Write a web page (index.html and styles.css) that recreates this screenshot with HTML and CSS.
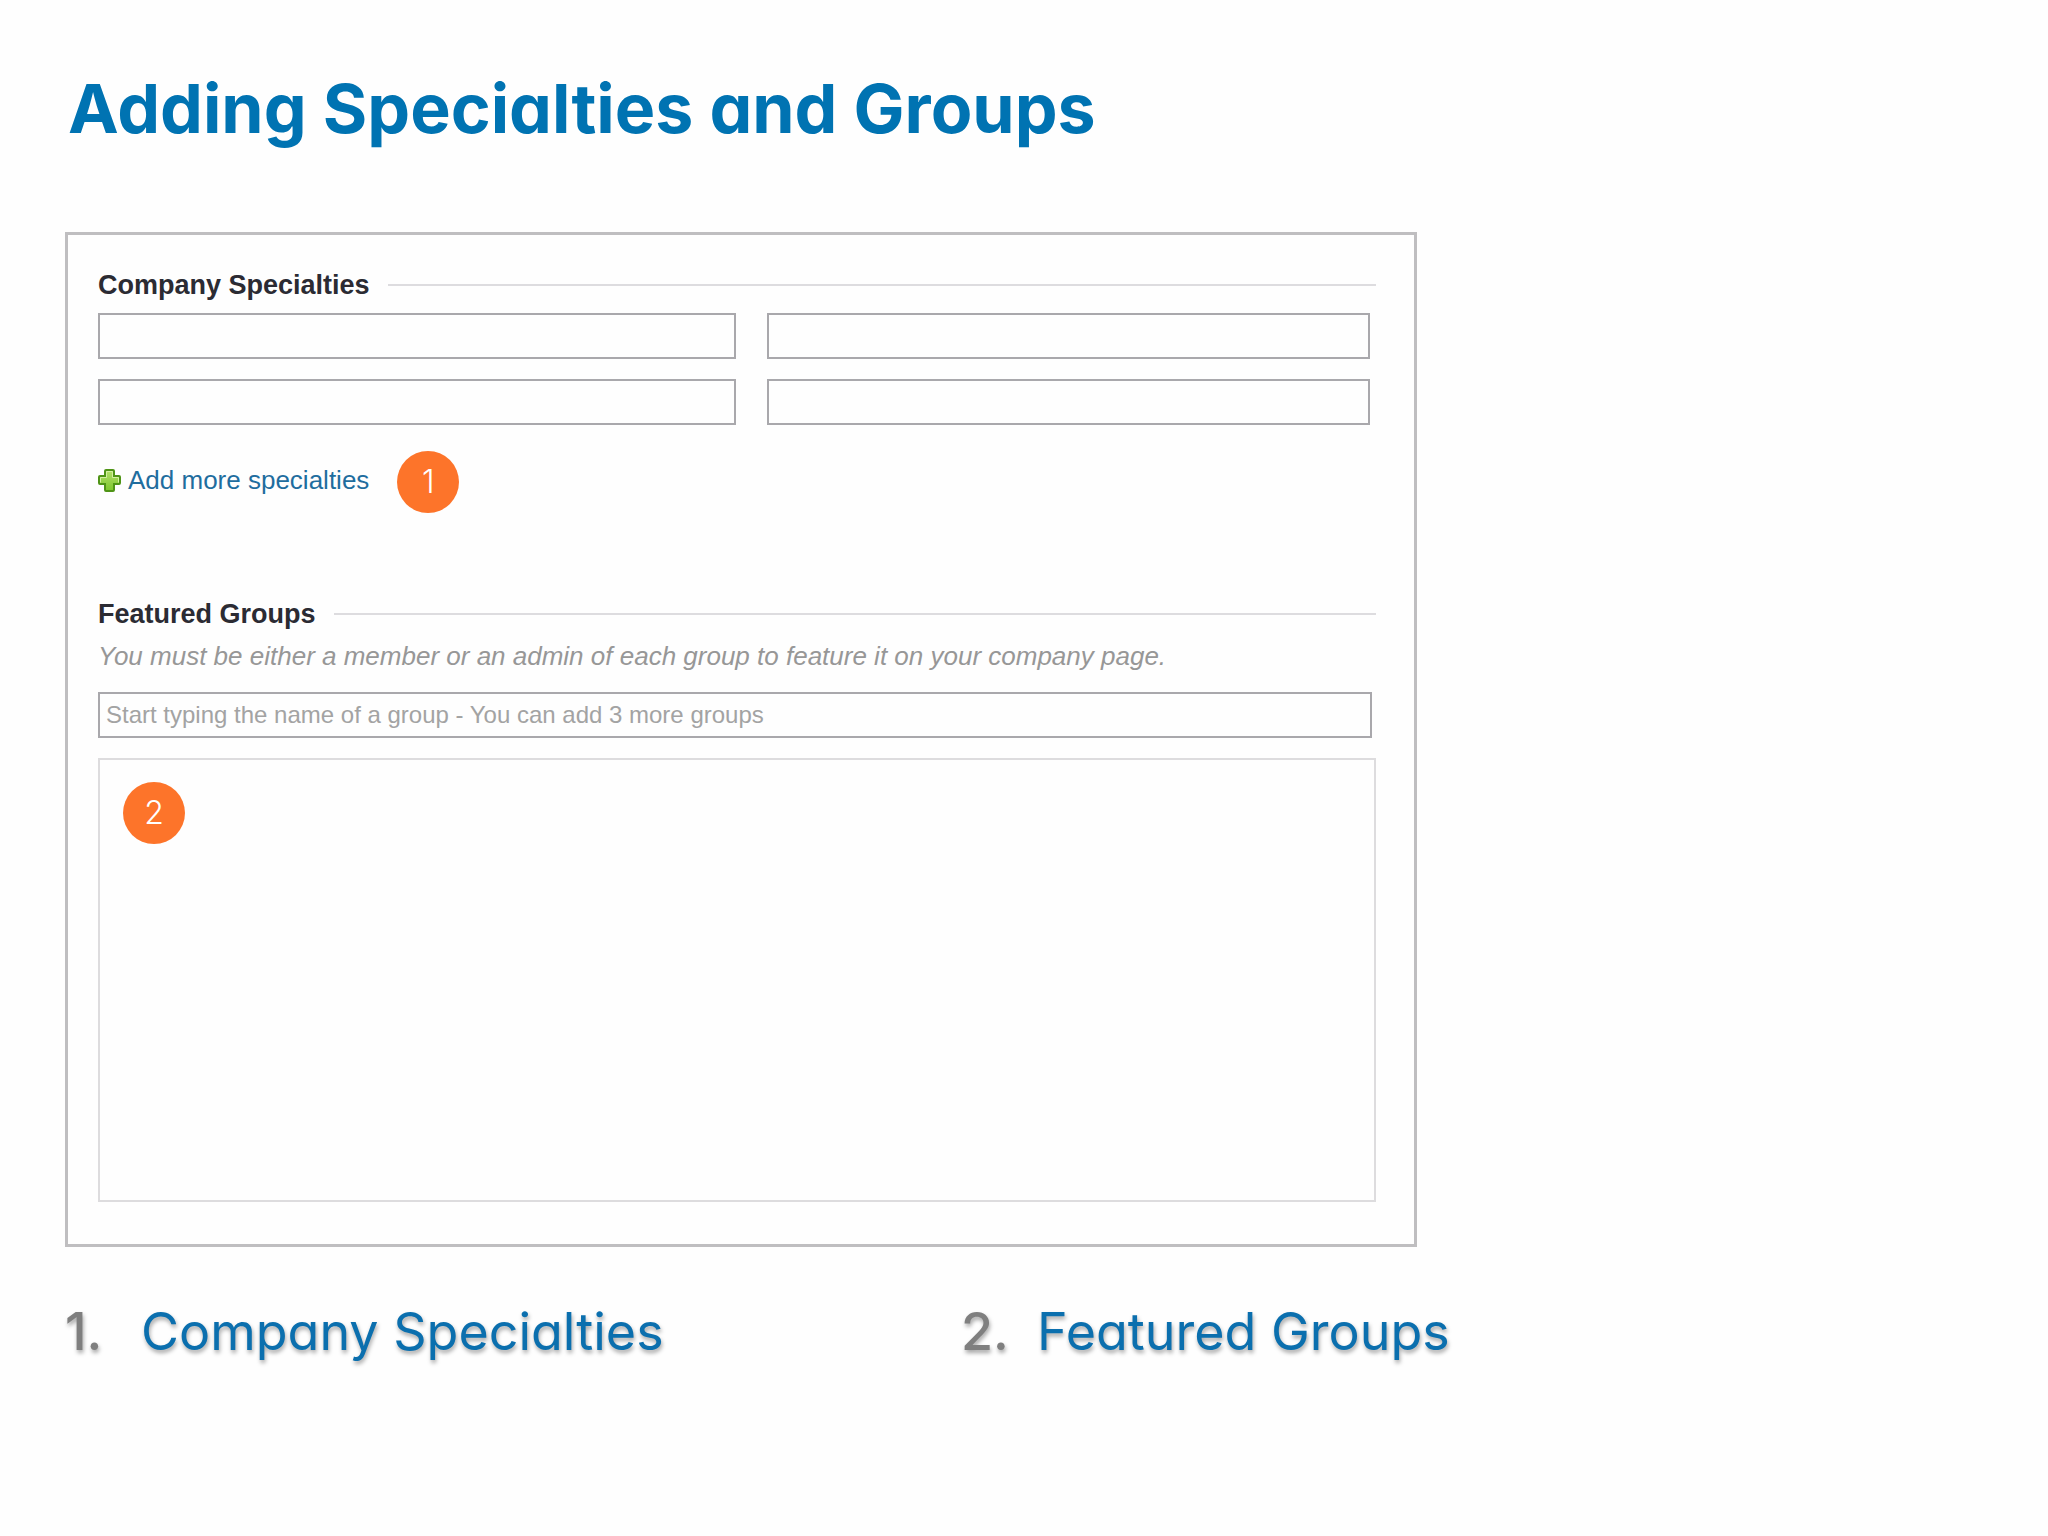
FILE: index.html
```html
<!DOCTYPE html>
<html lang="en">
<head>
<meta charset="utf-8">
<title>Adding Specialties and Groups</title>
<link rel="stylesheet" href="styles.css">
</head>
<body>
<main class="slide">
  <h1 class="title">Adding Specialties and Groups</h1>

  <form class="panel">
    <section class="section">
      <h2 class="section-heading">Company Specialties</h2>
      <div class="specialties">
        <input class="field" type="text" aria-label="Specialty 1">
        <input class="field" type="text" aria-label="Specialty 2">
        <input class="field" type="text" aria-label="Specialty 3">
        <input class="field" type="text" aria-label="Specialty 4">
      </div>
      <div class="add-row">
        <a class="add-link" href="#">
          <svg class="plus" viewBox="0 0 23 23" aria-hidden="true">
            <defs>
              <linearGradient id="leaf" x1="0" y1="0" x2="0" y2="1">
                <stop offset="0" stop-color="#b4e06a"/>
                <stop offset="1" stop-color="#7cc62c"/>
              </linearGradient>
            </defs>
            <path d="M8 1h7q1 0 1 1v5h5q1 0 1 1v6q0 1-1 1h-5v6q0 1-1 1H8q-1 0-1-1v-6H2q-1 0-1-1V8q0-1 1-1h5V2q0-1 1-1z" fill="url(#leaf)" stroke="#4f9416" stroke-width="2"/>
            <path d="M2.500 13.500v-5h6v-6h6v6h6v5" fill="none" stroke="#d3f0a0" stroke-width="1"/>
          </svg>
          Add more specialties</a>
        <span class="badge">1</span>
      </div>
    </section>

    <section class="section">
      <h2 class="section-heading">Featured Groups</h2>
      <p class="hint" id="group-hint">You must be either a member or an admin of each group to feature it on your company page.</p>
      <input class="field field-group" type="text" aria-label="Featured group" aria-describedby="group-hint" placeholder="Start typing the name of a group - You can add 3 more groups">
      <div class="group-list">
        <span class="badge">2</span>
      </div>
    </section>
  </form>

  <ol class="legend">
    <li class="legend-item"><span class="legend-number">1.</span>Company Specialties</li>
    <li class="legend-item"><span class="legend-number">2.</span>Featured Groups</li>
  </ol>
</main>
</body>
</html>
```
FILE: styles.css
```css
* {
  box-sizing: border-box;
}

body {
  margin: 0;
  background: #fefefe;
  font-family: "Liberation Sans", Arial, sans-serif;
  font-size: 26px;
  line-height: 32px;
}

.slide {
  padding: 64px 65px;
}

.title {
  margin: 0;
  padding-left: 3px;
  color: #0073b2;
  font-family: Inter, "Century Gothic", sans-serif;
  font-feature-settings: "cv11";
  font-size: 68px;
  font-weight: 700;
  line-height: 88px;
}

.panel {
  width: 70.5%;
  margin-top: 80px;
  padding: 34px 38px 42px 30px;
  border: 3px solid #bfbec0;
}

.section + .section {
  margin-top: 85px;
}

.section-heading {
  display: flex;
  align-items: center;
  gap: 18px;
  margin: 0;
  color: #2b2b33;
  font-size: 27px;
  font-weight: 700;
  line-height: 32px;
}

.section-heading::after {
  content: "";
  flex: 1;
  height: 2px;
  background: #dddcdf;
}

.specialties {
  display: grid;
  grid-template-columns: 638fr 604fr;
  gap: 20px 31px;
  margin: 12px 6px 0 0;
}

.field {
  width: 100%;
  height: 46px;
  padding: 0 7px;
  border: 2px solid #a9a8ac;
  background: #fefefe;
  color: #333;
  font: inherit;
}

.field::placeholder {
  color: #a3a3a3;
  opacity: 1;
}

.add-row {
  display: flex;
  align-items: center;
  gap: 28px;
  margin-top: 26px;
}

.add-link {
  display: flex;
  align-items: center;
  gap: 7px;
  padding-bottom: 4px;
  color: #1f6d9e;
  text-decoration: none;
}

.plus {
  width: 23px;
  height: 23px;
}

.badge {
  display: flex;
  align-items: center;
  justify-content: center;
  width: 62px;
  height: 62px;
  border-radius: 50%;
  background: #fd742a;
  color: #fff;
  font-family: Inter, "Century Gothic", sans-serif;
  font-size: 32px;
  font-weight: 300;
}

.hint {
  margin: 10px 0 20px;
  color: #979797;
  font-style: italic;
}

.field-group {
  display: block;
  width: calc(100% - 4px);
  padding: 0 6px;
  font-size: 24px;
}

.group-list {
  min-height: 444px;
  margin-top: 20px;
  padding: 22px 23px;
  border: 2px solid #dddcde;
}

.legend {
  display: grid;
  grid-template-columns: 896px 1fr;
  margin: 53px 0 0;
  padding: 0;
  list-style: none;
  color: #0b6fae;
  font-family: Inter, "Century Gothic", sans-serif;
  font-feature-settings: "cv11";
  font-size: 52px;
  line-height: 64px;
  text-shadow: 1px 3px 4px rgba(0, 0, 0, 0.35);
}

.legend-item {
  display: flex;
}

.legend-number {
  width: 76px;
  color: #7f7f7f;
  font-weight: 500;
}
```
